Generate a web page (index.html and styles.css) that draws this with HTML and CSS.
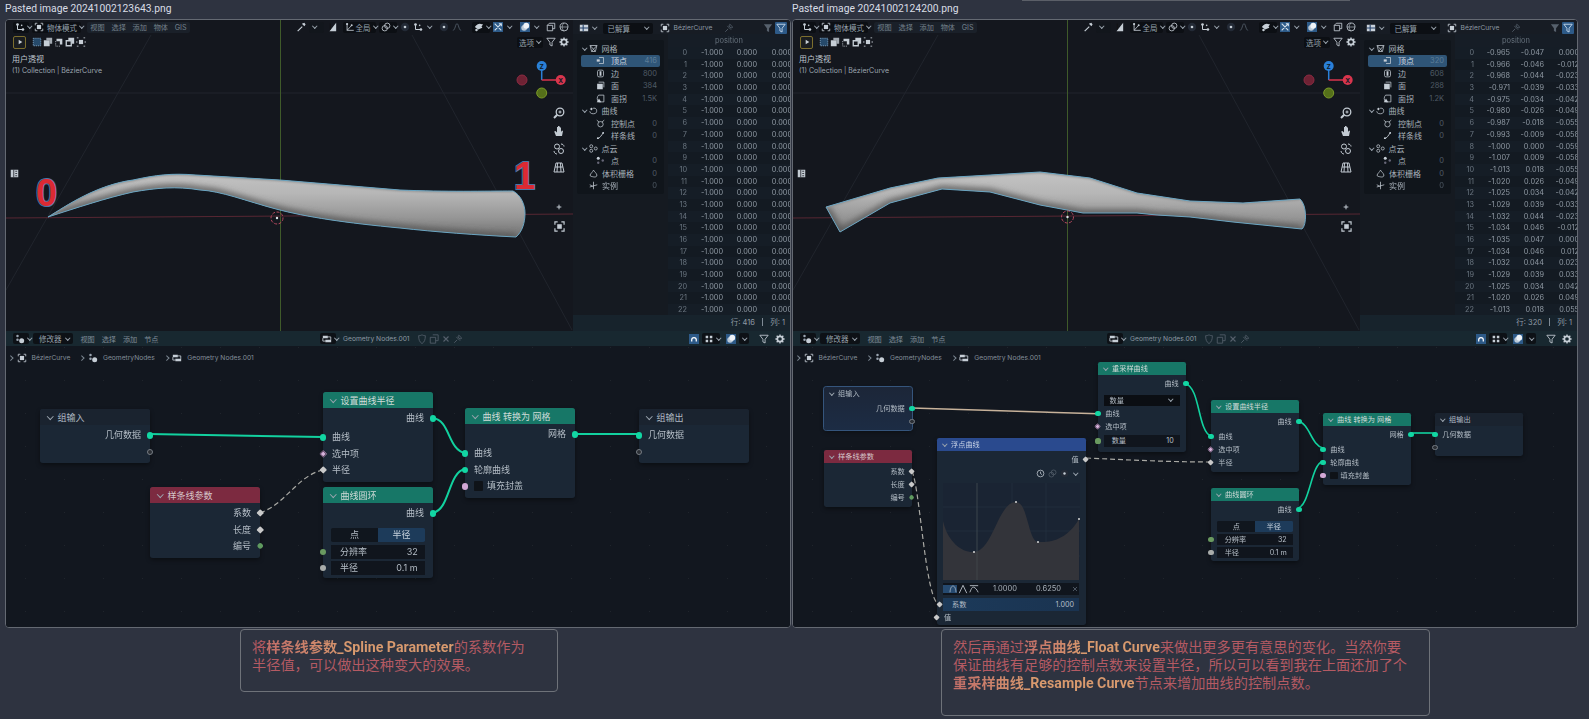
FILE: index.html
```html
<!DOCTYPE html>
<html lang="zh-CN">
<head>
<meta charset="utf-8">
<title>Pasted images</title>
<link rel="stylesheet" href="styles.css">
</head>
<body>
<svg class="defs" aria-hidden="true">
  <defs>
    <linearGradient id="shade" gradientUnits="userSpaceOnUse" x1="0" y1="150" x2="0" y2="218">
      <stop offset="0" stop-color="#c4c4c4"/><stop offset=".35" stop-color="#b6b6b6"/><stop offset=".7" stop-color="#969696"/><stop offset="1" stop-color="#707070"/>
    </linearGradient>
    <filter id="soft" x="-10%" y="-50%" width="120%" height="200%"><feGaussianBlur stdDeviation="3"/></filter>
    <filter id="soft1" x="-10%" y="-50%" width="120%" height="200%"><feGaussianBlur stdDeviation="1.200"/></filter>
    <clipPath id="clip-a"><path id="shape-a" d="M42 197C60 186 90 165 127 160C150 155 165 153 190 155L274 160L394 170C440 172 480 171 507 171C515 175 519 185 519 193C519 203 516 212 510 217C470 215 430 212 394 208C340 203 300 197 270 189C240 181 215 171 194 170C170 166 150 168 127 172C100 178 70 188 42 197Z"/></clipPath>
    <clipPath id="clip-b"><path id="shape-b" d="M33 187 97 168 145 158 197 155 247 152 297 158 344 173 397 181 450 183 507 179C514 185 514 205 509 209L440 202 397 197 364 195 344 193 290 193 247 185 197 172 149 169 97 183 47 212Z"/></clipPath>
  </defs>
  <symbol id="i-axes" viewBox="0 0 12 12"><path d="M3 3v6h6" fill="none" stroke="currentColor" stroke-width="1.2"/><circle cx="3" cy="3" r="1.6" fill="currentColor"/><circle cx="9.5" cy="9" r="1.6" fill="currentColor"/><circle cx="8" cy="4" r="1" fill="currentColor"/></symbol>
  <symbol id="i-obj" viewBox="0 0 12 12"><path d="M1.5 4V1.5H4M8 1.5h2.5V4M10.500 8v2.500H8M4 10.500H1.500V8" fill="none" stroke="currentColor"/><rect x="3.500" y="3.500" width="5" height="5" fill="currentColor"/></symbol>
  <symbol id="i-play" viewBox="0 0 12 12"><path d="M4 2.500 9.500 6 4 9.500z" fill="currentColor"/></symbol>
  <symbol id="i-m1" viewBox="0 0 12 12"><rect x="1.500" y="1.500" width="9" height="9" fill="#264a6b" stroke="#7ea6c8" stroke-dasharray="1.500 1"/></symbol>
  <symbol id="i-m2" viewBox="0 0 12 12"><path d="M1 4h7v7H1z" fill="currentColor"/><path d="M4 1h7v7H8V4H4z" fill="currentColor" opacity=".8"/></symbol>
  <symbol id="i-m3" viewBox="0 0 12 12"><path d="M3 2h7v7H7V5H3z" fill="currentColor"/><path d="M2 5v6h6" fill="none" stroke="currentColor" stroke-dasharray="1 1"/></symbol>
  <symbol id="i-m4" viewBox="0 0 12 12"><path d="M4 1h7v7H8V4H4z" fill="currentColor"/><path d="M1.500 4.500h6v6h-6z" fill="none" stroke="currentColor" stroke-width="1.600"/></symbol>
  <symbol id="i-m5" viewBox="0 0 12 12"><rect x="3.500" y="3.500" width="5" height="5" fill="currentColor"/><path d="M1 1h2M9 1h2M1 11h2M9 11h2M1 5v2M11 5v2" stroke="currentColor"/></symbol>
  <symbol id="i-drop" viewBox="0 0 12 12"><path d="M1.500 10.500 7 5l1 1-5.500 5.500zM7 2l3 3 1.500-2L10 .8z" fill="currentColor"/></symbol>
  <symbol id="i-curve" viewBox="0 0 12 12"><path d="M1 11h2l8-10v10z" fill="currentColor"/><path d="M4 2v7" stroke="#111" /></symbol>
  <symbol id="i-glob" viewBox="0 0 12 12"><path d="M2.500 2v8h8M2.500 10 8 4" fill="none" stroke="currentColor"/><circle cx="2.500" cy="2.500" r="1.300" fill="currentColor"/><circle cx="8" cy="4" r="1.200" fill="currentColor"/></symbol>
  <symbol id="i-link" viewBox="0 0 12 12"><circle cx="4.500" cy="7.500" r="3.200" fill="none" stroke="currentColor"/><circle cx="7.500" cy="4.500" r="3.200" fill="none" stroke="currentColor"/></symbol>
  <symbol id="i-prop" viewBox="0 0 12 12"><circle cx="6" cy="6" r="5" fill="#232a36"/><circle cx="6" cy="6" r="1.600" fill="currentColor"/></symbol>
  <symbol id="i-wave" viewBox="0 0 12 12"><path d="M1 10C4 10 4 2 6 2s2 8 5 8" fill="none" stroke="currentColor"/></symbol>
  <symbol id="i-eye" viewBox="0 0 12 12"><path d="M1 6c2-3 4-4 6-4l4 1-2 2 1 2-5 2z" fill="currentColor"/><circle cx="3" cy="9.500" r="1.500" fill="currentColor"/></symbol>
  <symbol id="i-giz" viewBox="0 0 12 12"><rect width="12" height="12" fill="#2d5a88"/><path d="M2 2l8 8M10 2 2 10M7 2h3v3" stroke="#d5e3ef" fill="none" stroke-width="1.300"/></symbol>
  <symbol id="i-over" viewBox="0 0 12 12"><rect width="12" height="12" fill="#2d5a88"/><circle cx="5" cy="7" r="3.500" fill="#b9c9d8"/><circle cx="7.500" cy="4.500" r="3.500" fill="#eef3f8"/></symbol>
  <symbol id="i-cube" viewBox="0 0 12 12"><path d="M1.500 4h6.500v6.500H1.500zM4 1.500h6.500V8H8M1.500 4 4 1.500" fill="none" stroke="currentColor"/></symbol>
  <symbol id="i-sphere" viewBox="0 0 12 12"><circle cx="6" cy="6" r="4.800" fill="none" stroke="currentColor"/><path d="M1.200 6h9.600M6 1.200c-3 3-3 6.600 0 9.600" fill="none" stroke="currentColor" stroke-width=".7"/></symbol>
  <symbol id="i-filter" viewBox="0 0 12 12"><path d="M1 1.500h10L7.300 6.300v4.500L4.700 9.500V6.300z" fill="none" stroke="currentColor"/></symbol>
  <symbol id="i-filterb" viewBox="0 0 12 12"><path d="M1 1.500h10L7.300 6.300v4.500L4.700 9.500V6.300z" fill="currentColor"/></symbol>
  <symbol id="i-gear" viewBox="0 0 12 12"><circle cx="6" cy="6" r="3.200" fill="none" stroke="currentColor" stroke-width="2"/><path d="M6 .5v2M6 9.500v2M.5 6h2M9.500 6h2M2 2l1.500 1.500M8.500 8.500 10 10M10 2 8.500 3.500M3.500 8.500 2 10" stroke="currentColor" stroke-width="1.600"/></symbol>
  <symbol id="i-spread" viewBox="0 0 12 12"><path d="M1 2h10v8H1z" fill="#c9d2dc"/><path d="M5 2v8M1 6h10" stroke="#24406a" stroke-width="1.300"/></symbol>
  <symbol id="i-pin" viewBox="0 0 12 12"><path d="M1.500 10.500 5 7M4 3.500 8.500 8M7 1.500l3.500 3.500-2 1-2.500-2.500z" fill="none" stroke="currentColor"/></symbol>
  <symbol id="i-mesh" viewBox="0 0 12 12"><path d="M1.500 2h9L8.500 10h-5zM1.500 2 6 7l4.500-5M6 7l-2.500 3M6 7l2.500 3" fill="none" stroke="currentColor"/></symbol>
  <symbol id="i-vert" viewBox="0 0 12 12"><path d="M4 2h6v8H4" fill="none" stroke="currentColor"/><rect x="1" y="4.500" width="4" height="3" fill="currentColor"/></symbol>
  <symbol id="i-edge" viewBox="0 0 12 12"><rect x="2" y="1.500" width="8" height="9" rx="2" fill="none" stroke="currentColor"/><path d="M6 3v6" stroke="currentColor" stroke-width="2.500"/></symbol>
  <symbol id="i-face" viewBox="0 0 12 12"><path d="M1.500 3.500h7.500v7.500H1.500z" fill="currentColor"/><path d="M3.500 1.500h7v7" fill="none" stroke="currentColor"/></symbol>
  <symbol id="i-corn" viewBox="0 0 12 12"><path d="M3.500 1.500h7v9h-7C1 8 1 4 3.500 1.500z" fill="none" stroke="currentColor"/><path d="M1 11l3-5 3 5z" fill="currentColor"/></symbol>
  <symbol id="i-spl" viewBox="0 0 12 12"><path d="M1 7c0 3 4 4 7 3s3-6 0-7-3 2-5 1" fill="none" stroke="currentColor"/><path d="M4 2v4L1 4z" fill="currentColor"/></symbol>
  <symbol id="i-ctrl" viewBox="0 0 12 12"><circle cx="6" cy="7" r="3.600" fill="none" stroke="currentColor"/><path d="M1 1.500 4 4M11 1.500 8 4" stroke="currentColor"/></symbol>
  <symbol id="i-sline" viewBox="0 0 12 12"><path d="M2 10c3 0 5-4 8-8" fill="none" stroke="currentColor" stroke-width="1.200"/><circle cx="2.500" cy="9.500" r="1.300" fill="currentColor"/><circle cx="9.500" cy="2.500" r="1.300" fill="currentColor"/></symbol>
  <symbol id="i-cloud" viewBox="0 0 12 12"><circle cx="3" cy="3" r="2" fill="none" stroke="currentColor"/><circle cx="3" cy="9" r="2" fill="none" stroke="currentColor"/><circle cx="9" cy="6" r="2" fill="none" stroke="currentColor"/></symbol>
  <symbol id="i-dot" viewBox="0 0 12 12"><circle cx="3" cy="3" r="2" fill="currentColor"/><circle cx="3" cy="9" r="1.600" fill="#667"/><circle cx="9" cy="6" r="1.600" fill="#667"/></symbol>
  <symbol id="i-vol" viewBox="0 0 12 12"><path d="M6 1.500c1 2 4 4 4.500 6.500S8 11 6 10.500 1 10 1.500 8 5 4 6 1.500z" fill="none" stroke="currentColor"/></symbol>
  <symbol id="i-inst" viewBox="0 0 12 12"><path d="M6 1v10M1 8l10-3M1 5l4 2" fill="none" stroke="currentColor"/></symbol>
  <symbol id="i-zoom" viewBox="0 0 12 12"><circle cx="7" cy="5" r="3.800" fill="none" stroke="currentColor" stroke-width="1.300"/><path d="M4.200 7.800 1 11" stroke="currentColor" stroke-width="2"/><path d="M5.500 5h3M7 3.500v3" stroke="currentColor"/></symbol>
  <symbol id="i-hand" viewBox="0 0 12 12"><path d="M3 11 1.200 6.500 2.500 6 4 7.500V2h1v3V1h1v4V1.500h1V5 2.500h1V7l1-1.500 1 .5L9 11z" fill="currentColor"/></symbol>
  <symbol id="i-cam" viewBox="0 0 12 12"><circle cx="4" cy="3.500" r="2.500" fill="none" stroke="currentColor"/><circle cx="8" cy="8" r="2.500" fill="none" stroke="currentColor"/><path d="M1 8c0 2 2 3 3 3M11 3.500C11 2 9.500 1 8 1" fill="none" stroke="currentColor"/></symbol>
  <symbol id="i-grid" viewBox="0 0 12 12"><path d="M3 2h6l2 9H1zM2.200 6h7.600M4.500 2 4 11M7.500 2 8 11" fill="none" stroke="currentColor"/></symbol>
  <symbol id="i-plus" viewBox="0 0 12 12"><path d="M6 2.500v7M2.500 6h7" stroke="currentColor" stroke-width="1.500"/></symbol>
  <symbol id="i-frame" viewBox="0 0 12 12"><path d="M1 4V1h3M8 1h3v3M11 8v3H8M4 11H1V8" fill="none" stroke="currentColor" stroke-width="1.300"/><rect x="3.500" y="3.500" width="5" height="5" fill="currentColor"/></symbol>
  <symbol id="i-side" viewBox="0 0 12 12"><rect x="1" y="1" width="10" height="10" fill="currentColor"/><path d="M5 1v10M7 3h2.500M7 6h2.500M7 9h2.500" stroke="#14171e"/></symbol>
  <symbol id="i-gn" viewBox="0 0 12 12"><circle cx="3" cy="2.500" r="1.500" fill="#9aa5b1"/><circle cx="3" cy="7" r="1.500" fill="#9aa5b1"/><circle cx="8" cy="8" r="3" fill="currentColor"/></symbol>
  <symbol id="i-ng" viewBox="0 0 12 12"><path d="M1 2h6v3H1zM4 7h7v3H4z" fill="currentColor"/><path d="M7 3.500h3.500V7M4 8.500H1V5" fill="none" stroke="currentColor"/></symbol>
  <symbol id="i-shield" viewBox="0 0 12 12"><path d="M2 2c2 0 3-.5 4-1 1 .5 2 1 4 1 0 5-1 7.500-4 9.500C3 9.500 2 7 2 2z" fill="none" stroke="currentColor"/></symbol>
  <symbol id="i-copy" viewBox="0 0 12 12"><path d="M4.500 1h6.500v7H8M1.500 4h6.500v7H1.500z" fill="none" stroke="currentColor"/></symbol>
  <symbol id="i-x" viewBox="0 0 12 12"><path d="M3 3l6 6M9 3l-6 6" stroke="currentColor" stroke-width="1.300"/></symbol>
  <symbol id="i-snap" viewBox="0 0 12 12"><rect width="12" height="12" fill="#2d5a88"/><path d="M2.500 7A3.500 3.500 0 1 1 9.500 7v2H8V7a2 2 0 0 0-4 0v2H2.500z" fill="#fff"/></symbol>
  <symbol id="i-snap2" viewBox="0 0 12 12"><path d="M2 2h3v3H2zM7 2h3v3H7zM2 7h3v3H2zM7 7h3v3H7z" fill="currentColor"/></symbol>
  <symbol id="i-hist" viewBox="0 0 12 12"><circle cx="6" cy="6" r="4.500" fill="none" stroke="currentColor"/><path d="M6 3.500V6l2 1.500" fill="none" stroke="currentColor"/></symbol>
  <symbol id="i-auto" viewBox="0 0 12 12"><path d="M1.500 11C2 4 4 1.500 6 1.500S10 4 10.500 11" fill="none" stroke="currentColor"/></symbol>
  <symbol id="i-vec" viewBox="0 0 12 12"><path d="M1.500 11 6 1.500 10.500 11" fill="none" stroke="currentColor"/></symbol>
  <symbol id="i-free" viewBox="0 0 12 12"><path d="M1 10c2-5 3-7 5-6s3 2 5 6M1 2h10" fill="none" stroke="currentColor"/></symbol>
</svg>

<div class="edge"></div>
<main class="page">

<!-- ============ left ============ -->
<section class="col">
  <div class="fname">Pasted image 20241002123643.png</div>
  <div class="shot shot-a">
    <div class="top">
      <div class="vp">
        <svg class="vp-bg" viewBox="0 0 567 311">
          <path class="gl" d="M0 73H567M145 15 0 270M406 15 566 310"/>
          <path class="gy" d="M274.500 0V311"/>
          <path class="gx" d="M0 198 567 194"/>
          <use class="body" href="#shape-a"/>
          <g clip-path="url(#clip-a)">
            <path class="under" d="M42 197C70 188 100 178 127 172C150 168 170 166 194 170C215 171 240 181 270 189C300 197 340 203 394 208C430 212 470 215 510 217"/>
            <path class="upper" d="M42 197C60 186 90 165 127 160C150 155 165 153 190 155L274 160L394 170C440 172 480 171 507 171"/>
          </g>
          <use class="outline" href="#shape-a"/>
          <circle class="cur" cx="271" cy="198" r="6"/><circle class="curd" cx="271" cy="198" r="1.200"/>
          <path class="zax" d="M535.700 46V60"/><path class="xax" d="M535.700 60H554.700"/>
          <circle class="gxn" cx="516" cy="60" r="5"/><circle class="gyn" cx="535.700" cy="73" r="5"/><circle class="gzn" cx="535.700" cy="46" r="5"/><circle class="gxp" cx="554.700" cy="60" r="5"/>
          <text class="gl-t" x="535.700" y="48.500">Z</text><text class="gl-t" x="554.700" y="62.500">X</text>
          <use class="tool" href="#i-zoom" x="547" y="87" width="12" height="12"/><use class="tool" href="#i-hand" x="547" y="105" width="12" height="12"/><use class="tool" href="#i-cam" x="547" y="123" width="12" height="12"/><use class="tool" href="#i-grid" x="547" y="141" width="12" height="12"/><use class="tool" href="#i-plus" x="549" y="183" width="8" height="8"/><use class="tool" href="#i-frame" x="548" y="201" width="11" height="11"/><use class="tool" href="#i-side" x="4" y="149" width="9" height="9"/>
        </svg>
        <div class="vh">
          <span class="dd d16"><svg class="ic"><use href="#i-axes"/></svg><i class="cv"></i></span>
          <span class="dd d49"><svg class="ic"><use href="#i-obj"/></svg><b>物体模式</b><i class="cv"></i></span>
          <span class="menus m103"><b>视图</b><b>选择</b><b>添加</b><b>物体</b><b>GIS</b></span>
          <span class="tools t-r">
            <svg class="ic"><use href="#i-drop"/></svg>
            <span class="dd d14 ghost"><i class="cv"></i></span>
            <svg class="ic"><use href="#i-curve"/></svg>
            <span class="dd d33 sp"><svg class="ic"><use href="#i-glob"/></svg><b>全局</b><i class="cv"></i></span>
            <span class="dd d18"><svg class="ic"><use href="#i-link"/></svg><i class="cv"></i></span>
            <svg class="ic"><use href="#i-prop"/></svg><svg class="ic"><use href="#i-axes"/></svg><i class="cv"></i>
            <svg class="ic sp"><use href="#i-prop"/></svg><svg class="ic dim"><use href="#i-wave"/></svg>
            <span class="dd d18 sp2"><svg class="ic"><use href="#i-eye"/></svg><i class="cv"></i></span>
            <svg class="ic"><use href="#i-giz"/></svg><i class="cv"></i>
            <svg class="ic sp"><use href="#i-over"/></svg><i class="cv"></i>
            <svg class="ic sp"><use href="#i-cube"/></svg><svg class="ic"><use href="#i-sphere"/></svg>
          </span>
        </div>
        <div class="vh vh2">
          <span class="playb"><svg class="ic"><use href="#i-play"/></svg></span>
          <svg class="ic"><use href="#i-m1"/></svg><svg class="ic"><use href="#i-m2"/></svg><svg class="ic"><use href="#i-m3"/></svg><svg class="ic"><use href="#i-m4"/></svg><svg class="ic"><use href="#i-m5"/></svg>
          <span class="tools t-r"><span class="dd d26"><b>选项</b><i class="cv"></i></span><svg class="ic"><use href="#i-filter"/></svg><svg class="ic"><use href="#i-gear"/></svg></span>
        </div>
        <div class="ov"><p class="ov-c">用户透视</p><p>(1) Collection | BézierCurve</p></div>
        <span class="mark m0">0</span><span class="mark m1">1</span>
      </div>
      <div class="ss">
        <div class="ssh">
          <svg class="ic"><use href="#i-spread"/></svg><i class="cv"></i>
          <span class="dd d50"><b>已解算</b><i class="cv"></i></span>
          <svg class="ic"><use href="#i-obj"/></svg><span class="nm">BézierCurve</span><svg class="ic dim"><use href="#i-pin"/></svg>
          <svg class="ic dim push"><use href="#i-filterb"/></svg><span class="fblue"><svg class="ic"><use href="#i-filter"/></svg></span>
        </div>
        <div class="ssm">
          <div class="side">
            <div class="panel">
              <div class="sr"><i class="cv"></i><svg class="ic"><use href="#i-mesh"/></svg><span>网格</span></div>
              <div class="sr l1 on"><svg class="ic"><use href="#i-vert"/></svg><span>顶点</span><em>416</em></div>
              <div class="sr l1"><svg class="ic"><use href="#i-edge"/></svg><span>边</span><em>800</em></div>
              <div class="sr l1"><svg class="ic"><use href="#i-face"/></svg><span>面</span><em>384</em></div>
              <div class="sr l1"><svg class="ic"><use href="#i-corn"/></svg><span>面拐</span><em>1.5K</em></div>
              <div class="sr"><i class="cv"></i><svg class="ic"><use href="#i-spl"/></svg><span>曲线</span></div>
              <div class="sr l1"><svg class="ic"><use href="#i-ctrl"/></svg><span>控制点</span><em>0</em></div>
              <div class="sr l1"><svg class="ic"><use href="#i-sline"/></svg><span>样条线</span><em>0</em></div>
              <div class="sr"><i class="cv"></i><svg class="ic"><use href="#i-cloud"/></svg><span>点云</span></div>
              <div class="sr l1"><svg class="ic"><use href="#i-dot"/></svg><span>点</span><em>0</em></div>
              <div class="sr nc"><svg class="ic"><use href="#i-vol"/></svg><span>体积栅格</span><em>0</em></div>
              <div class="sr nc"><svg class="ic"><use href="#i-inst"/></svg><span>实例</span><em>0</em></div>
            </div>
          </div>
          <div class="tbl">
            <div class="thd"><span></span><span class="pos">position</span></div>
            <div class="tr"><b>0</b><span>-1.000</span><span>0.000</span><span>0.000</span></div>
            <div class="tr"><b>1</b><span>-1.000</span><span>0.000</span><span>0.000</span></div>
            <div class="tr"><b>2</b><span>-1.000</span><span>0.000</span><span>0.000</span></div>
            <div class="tr"><b>3</b><span>-1.000</span><span>0.000</span><span>0.000</span></div>
            <div class="tr"><b>4</b><span>-1.000</span><span>0.000</span><span>0.000</span></div>
            <div class="tr"><b>5</b><span>-1.000</span><span>0.000</span><span>0.000</span></div>
            <div class="tr"><b>6</b><span>-1.000</span><span>0.000</span><span>0.000</span></div>
            <div class="tr"><b>7</b><span>-1.000</span><span>0.000</span><span>0.000</span></div>
            <div class="tr"><b>8</b><span>-1.000</span><span>0.000</span><span>0.000</span></div>
            <div class="tr"><b>9</b><span>-1.000</span><span>0.000</span><span>0.000</span></div>
            <div class="tr"><b>10</b><span>-1.000</span><span>0.000</span><span>0.000</span></div>
            <div class="tr"><b>11</b><span>-1.000</span><span>0.000</span><span>0.000</span></div>
            <div class="tr"><b>12</b><span>-1.000</span><span>0.000</span><span>0.000</span></div>
            <div class="tr"><b>13</b><span>-1.000</span><span>0.000</span><span>0.000</span></div>
            <div class="tr"><b>14</b><span>-1.000</span><span>0.000</span><span>0.000</span></div>
            <div class="tr"><b>15</b><span>-1.000</span><span>0.000</span><span>0.000</span></div>
            <div class="tr"><b>16</b><span>-1.000</span><span>0.000</span><span>0.000</span></div>
            <div class="tr"><b>17</b><span>-1.000</span><span>0.000</span><span>0.000</span></div>
            <div class="tr"><b>18</b><span>-1.000</span><span>0.000</span><span>0.000</span></div>
            <div class="tr"><b>19</b><span>-1.000</span><span>0.000</span><span>0.000</span></div>
            <div class="tr"><b>20</b><span>-1.000</span><span>0.000</span><span>0.000</span></div>
            <div class="tr"><b>21</b><span>-1.000</span><span>0.000</span><span>0.000</span></div>
            <div class="tr"><b>22</b><span>-1.000</span><span>0.000</span><span>0.000</span></div>
          </div>
        </div>
        <div class="ssf">行: 416 <u></u> 列: 1</div>
      </div>
    </div>
    <div class="ne">
      <div class="neh">
        <span class="dd d16"><svg class="ic"><use href="#i-gn"/></svg><i class="cv"></i></span>
        <span class="dd d40"><b>修改器</b><i class="cv"></i></span>
        <span class="menus m82"><b>视图</b><b>选择</b><b>添加</b><b>节点</b></span>
        <span class="dd d16 ngb"><svg class="ic"><use href="#i-ng"/></svg><i class="cv"></i></span>
        <span class="nm nm-g">Geometry Nodes.001</span>
        <svg class="ic dim"><use href="#i-shield"/></svg><svg class="ic dim"><use href="#i-copy"/></svg><svg class="ic dim"><use href="#i-x"/></svg><svg class="ic dim"><use href="#i-pin"/></svg>
        <span class="tools t-r2"><svg class="ic"><use href="#i-snap"/></svg><span class="dd d18"><svg class="ic"><use href="#i-snap2"/></svg><i class="cv"></i></span><svg class="ic sp"><use href="#i-over"/></svg><span class="dd d9"><i class="cv"></i></span><svg class="ic sp2"><use href="#i-filter"/></svg><svg class="ic sp"><use href="#i-gear"/></svg></span>
      </div>
      <div class="crumbs"><i class="gt"></i><svg class="ic"><use href="#i-obj"/></svg><span>BézierCurve</span><i class="gt"></i><svg class="ic"><use href="#i-gn"/></svg><span>GeometryNodes</span><i class="gt"></i><svg class="ic"><use href="#i-ng"/></svg><span>Geometry Nodes.001</span></div>
      <svg class="links" viewBox="6 331 784 296">
        <path class="geo" d="M149 434 323 437"/>
        <path class="val" d="M260 512.700C285 505 298 475 323 470"/>
        <path class="geo" d="M433 418C450 420 448 450 465 453"/>
        <path class="geo" d="M433 512.700C450 510 448 472 465 469"/>
        <path class="geo" d="M575 434H638"/>
      </svg>
      <div class="node gin">
        <h4 class="hd"><i class="cv"></i>组输入</h4>
        <div class="row out">几何数据<i class="s o geo-s"></i></div>
        <div class="row out"><i class="s o emp"></i></div>
      </div>
      <div class="node spl">
        <h4 class="hd red"><i class="cv"></i>样条线参数</h4>
        <div class="row out">系数<i class="s o dia"></i></div>
        <div class="row out">长度<i class="s o dia"></i></div>
        <div class="row out">编号<i class="s o dia int"></i></div>
      </div>
      <div class="node setr">
        <h4 class="hd teal"><i class="cv"></i>设置曲线半径</h4>
        <div class="row out">曲线<i class="s o geo-s"></i></div>
        <div class="row gap">曲线<i class="s i geo-s"></i></div>
        <div class="row">选中项<i class="s i dia boo"></i></div>
        <div class="row">半径<i class="s i dia"></i></div>
      </div>
      <div class="node circ">
        <h4 class="hd teal"><i class="cv"></i>曲线圆环</h4>
        <div class="row out">曲线<i class="s o geo-s"></i></div>
        <div class="seg"><span>点</span><span class="on">半径</span></div>
        <div class="row fld">分辨率<em>32</em><i class="s i rint"></i></div>
        <div class="row fld">半径<em>0.1 m</em><i class="s i rval"></i></div>
      </div>
      <div class="node conv">
        <h4 class="hd teal"><i class="cv"></i>曲线 转换为 网格</h4>
        <div class="row out">网格<i class="s o geo-s"></i></div>
        <div class="row gap">曲线<i class="s i geo-s"></i></div>
        <div class="row">轮廓曲线<i class="s i geo-s"></i></div>
        <div class="row"><i class="chk"></i>填充封盖<i class="s i rboo"></i></div>
      </div>
      <div class="node gout">
        <h4 class="hd"><i class="cv"></i>组输出</h4>
        <div class="row">几何数据<i class="s i geo-s"></i></div>
        <div class="row"><i class="s i emp"></i></div>
      </div>
    </div>
  </div>
  <div class="note note-a"><p>将<strong>样条线参数_Spline Parameter</strong>的系数作为半径值，可以做出这种变大的效果。</p></div>
</section>

<!-- ============ right ============ -->
<section class="col">
  <div class="fname">Pasted image 20241002124200.png</div>
  <div class="shot shot-b">
    <div class="top">
      <div class="vp">
        <svg class="vp-bg" viewBox="0 0 567 311">
          <path class="gl" d="M0 73H567M145 15 0 270M406 15 566 310"/>
          <path class="gy" d="M274.500 0V311"/>
          <path class="gx" d="M0 198 567 194"/>
          <use class="body" href="#shape-b"/>
          <g clip-path="url(#clip-b)">
            <path class="under" d="M33 187 47 212 97 183 149 169 197 172 247 185 290 193 344 193 364 195 397 197 440 202 509 209"/>
            <path class="upper" d="M33 187 97 168 145 158 197 155 247 152 297 158 344 173 397 181 450 183 507 179"/>
          </g>
          <use class="outline" href="#shape-b"/>
          <circle class="cur" cx="274.500" cy="197" r="6"/><circle class="curd" cx="274.500" cy="197" r="1.200"/>
          <path class="zax" d="M535.700 46V60"/><path class="xax" d="M535.700 60H554.700"/>
          <circle class="gxn" cx="516" cy="60" r="5"/><circle class="gyn" cx="535.700" cy="73" r="5"/><circle class="gzn" cx="535.700" cy="46" r="5"/><circle class="gxp" cx="554.700" cy="60" r="5"/>
          <text class="gl-t" x="535.700" y="48.500">Z</text><text class="gl-t" x="554.700" y="62.500">X</text>
          <use class="tool" href="#i-zoom" x="547" y="87" width="12" height="12"/><use class="tool" href="#i-hand" x="547" y="105" width="12" height="12"/><use class="tool" href="#i-cam" x="547" y="123" width="12" height="12"/><use class="tool" href="#i-grid" x="547" y="141" width="12" height="12"/><use class="tool" href="#i-plus" x="549" y="183" width="8" height="8"/><use class="tool" href="#i-frame" x="548" y="201" width="11" height="11"/><use class="tool" href="#i-side" x="4" y="149" width="9" height="9"/>
        </svg>
        <div class="vh">
          <span class="dd d16"><svg class="ic"><use href="#i-axes"/></svg><i class="cv"></i></span>
          <span class="dd d49"><svg class="ic"><use href="#i-obj"/></svg><b>物体模式</b><i class="cv"></i></span>
          <span class="menus m103"><b>视图</b><b>选择</b><b>添加</b><b>物体</b><b>GIS</b></span>
          <span class="tools t-r">
            <svg class="ic"><use href="#i-drop"/></svg>
            <span class="dd d14 ghost"><i class="cv"></i></span>
            <svg class="ic"><use href="#i-curve"/></svg>
            <span class="dd d33 sp"><svg class="ic"><use href="#i-glob"/></svg><b>全局</b><i class="cv"></i></span>
            <span class="dd d18"><svg class="ic"><use href="#i-link"/></svg><i class="cv"></i></span>
            <svg class="ic"><use href="#i-prop"/></svg><svg class="ic"><use href="#i-axes"/></svg><i class="cv"></i>
            <svg class="ic sp"><use href="#i-prop"/></svg><svg class="ic dim"><use href="#i-wave"/></svg>
            <span class="dd d18 sp2"><svg class="ic"><use href="#i-eye"/></svg><i class="cv"></i></span>
            <svg class="ic"><use href="#i-giz"/></svg><i class="cv"></i>
            <svg class="ic sp"><use href="#i-over"/></svg><i class="cv"></i>
            <svg class="ic sp"><use href="#i-cube"/></svg><svg class="ic"><use href="#i-sphere"/></svg>
          </span>
        </div>
        <div class="vh vh2">
          <span class="playb"><svg class="ic"><use href="#i-play"/></svg></span>
          <svg class="ic"><use href="#i-m1"/></svg><svg class="ic"><use href="#i-m2"/></svg><svg class="ic"><use href="#i-m3"/></svg><svg class="ic"><use href="#i-m4"/></svg><svg class="ic"><use href="#i-m5"/></svg>
          <span class="tools t-r"><span class="dd d26"><b>选项</b><i class="cv"></i></span><svg class="ic"><use href="#i-filter"/></svg><svg class="ic"><use href="#i-gear"/></svg></span>
        </div>
        <div class="ov"><p class="ov-c">用户透视</p><p>(1) Collection | BézierCurve</p></div>
      </div>
      <div class="ss">
        <div class="ssh">
          <svg class="ic"><use href="#i-spread"/></svg><i class="cv"></i>
          <span class="dd d50"><b>已解算</b><i class="cv"></i></span>
          <svg class="ic"><use href="#i-obj"/></svg><span class="nm">BézierCurve</span><svg class="ic dim"><use href="#i-pin"/></svg>
          <svg class="ic dim push"><use href="#i-filterb"/></svg><span class="fblue"><svg class="ic"><use href="#i-filter"/></svg></span>
        </div>
        <div class="ssm">
          <div class="side">
            <div class="panel">
              <div class="sr"><i class="cv"></i><svg class="ic"><use href="#i-mesh"/></svg><span>网格</span></div>
              <div class="sr l1 on"><svg class="ic"><use href="#i-vert"/></svg><span>顶点</span><em>320</em></div>
              <div class="sr l1"><svg class="ic"><use href="#i-edge"/></svg><span>边</span><em>608</em></div>
              <div class="sr l1"><svg class="ic"><use href="#i-face"/></svg><span>面</span><em>288</em></div>
              <div class="sr l1"><svg class="ic"><use href="#i-corn"/></svg><span>面拐</span><em>1.2K</em></div>
              <div class="sr"><i class="cv"></i><svg class="ic"><use href="#i-spl"/></svg><span>曲线</span></div>
              <div class="sr l1"><svg class="ic"><use href="#i-ctrl"/></svg><span>控制点</span><em>0</em></div>
              <div class="sr l1"><svg class="ic"><use href="#i-sline"/></svg><span>样条线</span><em>0</em></div>
              <div class="sr"><i class="cv"></i><svg class="ic"><use href="#i-cloud"/></svg><span>点云</span></div>
              <div class="sr l1"><svg class="ic"><use href="#i-dot"/></svg><span>点</span><em>0</em></div>
              <div class="sr nc"><svg class="ic"><use href="#i-vol"/></svg><span>体积栅格</span><em>0</em></div>
              <div class="sr nc"><svg class="ic"><use href="#i-inst"/></svg><span>实例</span><em>0</em></div>
            </div>
          </div>
          <div class="tbl">
            <div class="thd"><span></span><span class="pos">position</span></div>
            <div class="tr"><b>0</b><span>-0.965</span><span>-0.047</span><span>0.000</span></div>
            <div class="tr"><b>1</b><span>-0.966</span><span>-0.046</span><span>-0.012</span></div>
            <div class="tr"><b>2</b><span>-0.968</span><span>-0.044</span><span>-0.023</span></div>
            <div class="tr"><b>3</b><span>-0.971</span><span>-0.039</span><span>-0.033</span></div>
            <div class="tr"><b>4</b><span>-0.975</span><span>-0.034</span><span>-0.042</span></div>
            <div class="tr"><b>5</b><span>-0.980</span><span>-0.026</span><span>-0.049</span></div>
            <div class="tr"><b>6</b><span>-0.987</span><span>-0.018</span><span>-0.055</span></div>
            <div class="tr"><b>7</b><span>-0.993</span><span>-0.009</span><span>-0.058</span></div>
            <div class="tr"><b>8</b><span>-1.000</span><span>0.000</span><span>-0.059</span></div>
            <div class="tr"><b>9</b><span>-1.007</span><span>0.009</span><span>-0.058</span></div>
            <div class="tr"><b>10</b><span>-1.013</span><span>0.018</span><span>-0.055</span></div>
            <div class="tr"><b>11</b><span>-1.020</span><span>0.026</span><span>-0.049</span></div>
            <div class="tr"><b>12</b><span>-1.025</span><span>0.034</span><span>-0.042</span></div>
            <div class="tr"><b>13</b><span>-1.029</span><span>0.039</span><span>-0.033</span></div>
            <div class="tr"><b>14</b><span>-1.032</span><span>0.044</span><span>-0.023</span></div>
            <div class="tr"><b>15</b><span>-1.034</span><span>0.046</span><span>-0.012</span></div>
            <div class="tr"><b>16</b><span>-1.035</span><span>0.047</span><span>0.000</span></div>
            <div class="tr"><b>17</b><span>-1.034</span><span>0.046</span><span>0.012</span></div>
            <div class="tr"><b>18</b><span>-1.032</span><span>0.044</span><span>0.023</span></div>
            <div class="tr"><b>19</b><span>-1.029</span><span>0.039</span><span>0.033</span></div>
            <div class="tr"><b>20</b><span>-1.025</span><span>0.034</span><span>0.042</span></div>
            <div class="tr"><b>21</b><span>-1.020</span><span>0.026</span><span>0.049</span></div>
            <div class="tr"><b>22</b><span>-1.013</span><span>0.018</span><span>0.055</span></div>
          </div>
        </div>
        <div class="ssf">行: 320 <u></u> 列: 1</div>
      </div>
    </div>
    <div class="ne">
      <div class="neh">
        <span class="dd d16"><svg class="ic"><use href="#i-gn"/></svg><i class="cv"></i></span>
        <span class="dd d40"><b>修改器</b><i class="cv"></i></span>
        <span class="menus m82"><b>视图</b><b>选择</b><b>添加</b><b>节点</b></span>
        <span class="dd d16 ngb"><svg class="ic"><use href="#i-ng"/></svg><i class="cv"></i></span>
        <span class="nm nm-g">Geometry Nodes.001</span>
        <svg class="ic dim"><use href="#i-shield"/></svg><svg class="ic dim"><use href="#i-copy"/></svg><svg class="ic dim"><use href="#i-x"/></svg><svg class="ic dim"><use href="#i-pin"/></svg>
        <span class="tools t-r2"><svg class="ic"><use href="#i-snap"/></svg><span class="dd d18"><svg class="ic"><use href="#i-snap2"/></svg><i class="cv"></i></span><svg class="ic sp"><use href="#i-over"/></svg><span class="dd d9"><i class="cv"></i></span><svg class="ic sp2"><use href="#i-filter"/></svg><svg class="ic sp"><use href="#i-gear"/></svg></span>
      </div>
      <div class="crumbs"><i class="gt"></i><svg class="ic"><use href="#i-obj"/></svg><span>BézierCurve</span><i class="gt"></i><svg class="ic"><use href="#i-gn"/></svg><span>GeometryNodes</span><i class="gt"></i><svg class="ic"><use href="#i-ng"/></svg><span>Geometry Nodes.001</span></div>
      <svg class="links" viewBox="793 331 784 296">
        <path class="sel-l" d="M912 408 1098 413.700"/>
        <path class="geo" d="M1186 384C1200 388 1198 432 1211 436"/>
        <path class="geo" d="M1298 421C1310 424 1311 445 1323 448"/>
        <path class="geo" d="M1298 508C1310 505 1311 464 1323 461"/>
        <path class="geo" d="M1410 433H1435"/>
        <path class="val" d="M1086 458C1130 460 1170 462 1211 462"/>
        <path class="val" d="M912 471C920 490 925 590 937 603"/>
      </svg>
      <div class="node gin sel">
        <h4 class="hd plain"><i class="cv"></i>组输入</h4>
        <div class="row out">几何数据<i class="s o geo-s"></i></div>
        <div class="row out"><i class="s o emp"></i></div>
      </div>
      <div class="node spl">
        <h4 class="hd red"><i class="cv"></i>样条线参数</h4>
        <div class="row out">系数<i class="s o dia"></i></div>
        <div class="row out">长度<i class="s o dia"></i></div>
        <div class="row out">编号<i class="s o dia int"></i></div>
      </div>
      <div class="node fc">
        <h4 class="hd blue"><i class="cv"></i>浮点曲线</h4>
        <div class="row out">值<i class="s o dia"></i></div>
        <div class="fc-tools"><svg class="ic"><use href="#i-hist"/></svg><svg class="ic dim"><use href="#i-link"/></svg><svg class="ic"><use href="#i-prop"/></svg><i class="cv"></i></div>
        <svg class="fc-box" viewBox="0 0 137 97">
          <path class="fc-grid" d="M34 0V97M69 0V97M103 0V97M0 24H137M0 48H137M0 73H137"/>
          <path class="fc-area" d="M0 38C5 60 20 70 31 69C50 68 55 19 73 19C85 19 85 58 95 59C110 60 125 55 136 36V97H0Z"/>
          <path class="fc-ax" d="M34 0V97"/>
          <circle class="fc-p" cx="31" cy="69" r="1"/><circle class="fc-p" cx="73" cy="19" r="1"/><circle class="fc-p" cx="95" cy="59" r="1"/><circle class="fc-p" cx="136" cy="36" r="1"/>
        </svg>
        <div class="fc-bar"><span class="fc-sel"><svg class="ic"><use href="#i-auto"/></svg></span><svg class="ic"><use href="#i-vec"/></svg><svg class="ic"><use href="#i-free"/></svg><span class="v1">1.0000</span><span class="v2">0.6250</span><svg class="ic dim"><use href="#i-x"/></svg></div>
        <div class="row fac">系数<em>1.000</em><i class="s i dia"></i></div>
        <div class="row">值<i class="s i dia"></i></div>
      </div>
      <div class="node res">
        <h4 class="hd teal"><i class="cv"></i>重采样曲线</h4>
        <div class="row out">曲线<i class="s o geo-s"></i></div>
        <div class="drop">数量<i class="cv"></i></div>
        <div class="row">曲线<i class="s i geo-s"></i></div>
        <div class="row">选中项<i class="s i dia boo"></i></div>
        <div class="row fld">数量<em>10</em><i class="s i rint"></i></div>
      </div>
      <div class="node setr">
        <h4 class="hd teal"><i class="cv"></i>设置曲线半径</h4>
        <div class="row out">曲线<i class="s o geo-s"></i></div>
        <div class="row gap">曲线<i class="s i geo-s"></i></div>
        <div class="row">选中项<i class="s i dia boo"></i></div>
        <div class="row">半径<i class="s i dia"></i></div>
      </div>
      <div class="node circ">
        <h4 class="hd teal"><i class="cv"></i>曲线圆环</h4>
        <div class="row out">曲线<i class="s o geo-s"></i></div>
        <div class="seg"><span>点</span><span class="on">半径</span></div>
        <div class="row fld">分辨率<em>32</em><i class="s i rint"></i></div>
        <div class="row fld">半径<em>0.1 m</em><i class="s i rval"></i></div>
      </div>
      <div class="node conv">
        <h4 class="hd teal"><i class="cv"></i>曲线 转换为 网格</h4>
        <div class="row out">网格<i class="s o geo-s"></i></div>
        <div class="row gap">曲线<i class="s i geo-s"></i></div>
        <div class="row">轮廓曲线<i class="s i geo-s"></i></div>
        <div class="row"><i class="chk"></i>填充封盖<i class="s i rboo"></i></div>
      </div>
      <div class="node gout">
        <h4 class="hd"><i class="cv"></i>组输出</h4>
        <div class="row">几何数据<i class="s i geo-s"></i></div>
        <div class="row"><i class="s i emp"></i></div>
      </div>
    </div>
  </div>
  <div class="note note-b"><p>然后再通过<strong>浮点曲线_Float Curve</strong>来做出更多更有意思的变化。当然你要保证曲线有足够的控制点数来设置半径，所以可以看到我在上面还加了个<strong>重采样曲线_Resample Curve</strong>节点来增加曲线的控制点数。</p></div>
</section>
</main>
</body>
</html>
```

FILE: styles.css
```css
* { box-sizing: border-box; }
html, body { margin: 0; height: 100%; }
body {
  background: #2e3340;
  font-family: "Inter", "Noto Sans CJK SC", sans-serif;
  overflow: hidden;
  position: relative;
}
p, h4 { margin: 0; font-weight: 400; }
i, em, b { font-style: normal; font-weight: 400; }

.defs { position: absolute; width: 0; height: 0; }
.edge { position: absolute; left: 1022px; top: 0; width: 328px; height: 1px; background: #5b5f68; }

.page { display: flex; gap: 1px; padding-left: 5px; }
.col { width: 786px; flex: none; }
.fname {
  height: 19px;
  font: 10.300px/18px "Roboto", sans-serif;
  color: #d9dee6;
}
.shot {
  width: 786px;
  height: 609px;
  border: 1px solid #646972;
  border-radius: 4px;
  background: #12171f;
  overflow: hidden;
  filter: blur(.45px);
}
.top { display: flex; height: 311px; }

/* shared small pieces */
.ic { width: 10px; height: 10px; flex: none; color: #c6ced6; display: block; }
.ic.dim { color: #56606c; }
.cv {
  display: inline-block; flex: none;
  width: 3.500px; height: 3.500px;
  border-right: 1px solid #9aa4ae; border-bottom: 1px solid #9aa4ae;
  transform: translateY(-1px) rotate(45deg);
  margin: 0 2px;
}
.dd {
  display: flex; align-items: center; flex: none;
  height: 11px; gap: 1px;
  padding: 0 2px;
  background: #0c0f14;
  border-radius: 2px;
  font-size: 7.500px;
  color: #97a2ad;
}
.dd b { flex: 1; white-space: nowrap; }
.ghost { background: #12161c; }
.d9 { width: 10px; } .d14 { width: 15px; } .d16 { width: 16px; } .d18 { width: 18px; }
.d26 { width: 26px; } .d33 { width: 33px; } .d40 { width: 40px; } .d49 { width: 49px; } .d50 { width: 50px; }
.menus {
  display: flex; justify-content: space-around; align-items: center; flex: none;
  height: 11px; margin-left: 6px;
  background: #1a2029;
  border-radius: 2px;
  font-size: 7.200px;
  color: #74808c;
}
.m103 { width: 103px; }
.m82 { width: 85px; background: transparent; color: #7f8b97; }
.tools { display: flex; align-items: center; gap: 3px; }
.sp { margin-left: 3px; }
.sp2 { margin-left: 7px; }

/* viewport */
.vp { position: relative; width: 567px; height: 311px; background: #14171e; padding-top: 1px; overflow: hidden; }
.vp-bg { position: absolute; left: 0; top: 0; width: 567px; height: 311px; }
.gl { fill: none; stroke: #21252d; stroke-width: 1; }
.gy { stroke: #3f5a2a; stroke-width: 1; }
.gx { stroke: #582733; stroke-width: 1; }
.body { fill: url(#shade); }
.outline { fill: none; stroke: #6aa5c2; stroke-width: 1; stroke-linejoin: round; }
.under { fill: none; stroke: #565656; stroke-width: 6; filter: url(#soft); }
.upper { fill: none; stroke: #8c8c8c; stroke-width: 2; filter: url(#soft1); }
.cur { fill: none; stroke: #b5495f; stroke-width: 1; stroke-dasharray: 3 1.500; }
.curd { fill: #dfe6ea; }
.zax { stroke: #2a80d8; stroke-width: 1.500; }
.xax { stroke: #d9354d; stroke-width: 1.500; }
.gzn { fill: #2a80d8; }
.gxp { fill: #d9354d; }
.gxn { fill: #6e2234; stroke: #8c2b42; }
.gyn { fill: #55701a; stroke: #7b9a28; }
.gl-t { font: 700 6.500px "Inter", sans-serif; fill: #0f1a26; text-anchor: middle; }
.tool { color: #c3cbd3; }
.vh { position: relative; display: flex; align-items: center; height: 12px; padding-left: 7px; }
.vh > .dd { margin-right: 3px; }
.vh .menus { margin-left: 3px; }
.vh .d49 b { padding-left: 2px; }
.vh2 { margin-top: 3px; gap: 1px; }
.playb { width: 13px; height: 13px; margin-right: 5px; border: 1px solid #7c6e2e; border-radius: 2px; background: #1a1d20; display: flex; align-items: center; justify-content: center; }
.playb .ic { width: 8px; height: 8px; }
.t-r { margin-left: auto; padding-right: 4px; }
.ov { position: relative; margin: 6px 0 0 6px; font-size: 7px; line-height: 11px; color: #9da6b0; white-space: nowrap; }
.ov-c { font-size: 8px; color: #bfc6ce; }
.mark {
  position: absolute;
  font: 700 38px/1 "Liberation Sans", sans-serif;
  color: #dc2a33;
  -webkit-text-stroke: 2px #4a76a8;
  paint-order: stroke fill;
}
.m0 { left: 30px; top: 154px; }
.m1 { left: 508px; top: 137px; }

/* spreadsheet */
.ss { width: 217px; height: 311px; display: flex; flex-direction: column; background: #161b23; }
.ssh { display: flex; align-items: center; height: 14px; padding: 2px 3px 0 6px; gap: 2px; background: #171c24; }
.ssh .d50 { margin-left: 2px; margin-right: 5px; }
.ssh .dd b { padding-left: 3px; }
.nm { font-size: 6.700px; color: #8d98a3; white-space: nowrap; }
.ssh .nm { margin: 0 10px 0 2px; }
.push { margin-left: auto; }
.fblue { display: flex; align-items: center; justify-content: center; width: 12px; height: 12px; background: #2d5a88; border-radius: 1px; }
.fblue .ic { color: #cfe0f0; }
.ssm { display: flex; height: 281px; }
.side { width: 95px; background: #151a21; padding: 6px 4px 0; }
.panel { height: 154px; padding-top: 2px; background: #10151b; border-radius: 2px; }
.sr { display: flex; align-items: center; height: 12.500px; margin: 0 4px; font-size: 8px; color: #a8b1ba; white-space: nowrap; border-radius: 2px; }
.sr .cv { margin: 0 2.500px 0 1.500px; }
.sr > .ic { width: 9px; height: 9px; margin-right: 4px; }
.sr.nc { padding-left: 8px; }
.sr.l1 { padding-left: 15px; }
.sr.l1 > .ic { margin-right: 6px; }
.sr.on { background: #2f5577; color: #d0d9e2; }
.sr em { margin-left: auto; padding-right: 3px; color: #4f5a65; font-size: 7.500px; }
.sr.on em { color: #5d7d98; }
.tbl { width: 122px; overflow: hidden; background: #131a22; }
.thd { display: grid; grid-template-columns: 22px 100px; height: 13px; background: #161d26; font-size: 7.500px; line-height: 14px; color: #66717c; }
.pos { text-align: center; padding-right: 22px; }
.tr { display: grid; grid-template-columns: 19px 36px 34px 35px; height: 11.700px; line-height: 11.700px; font-size: 7.300px; color: #919ba5; text-align: right; white-space: nowrap; }
.tr:nth-child(even) { background: #151d26; }
.tr b { color: #6b7681; }
.ssf { height: 16px; line-height: 16px; padding-right: 5px; text-align: right; background: #17232c; font-size: 7.500px; color: #8f9aa5; }
.ssf u { display: inline-block; width: 1px; height: 8px; margin: 0 5px; background: #7f8a95; vertical-align: -1px; }

/* node editor */
.ne {
  position: relative; height: 296px; overflow: hidden;
  background-color: #12171f;
  background-image: radial-gradient(rgba(255, 255, 255, .06) .6px, transparent 1px);
  background-size: 39px 33px;
}
.neh { display: flex; align-items: center; height: 15px; padding: 0 0 0 7px; gap: 2px; background: #182830; }
.neh .dd { background: #0d1116; }
.neh .d40 { margin: 0 1px 0 2px; }
.neh .d40 b { padding-left: 4px; }
.neh .menus { margin-left: 1px; }
.ngb { margin-left: 156px; }
.nm-g { margin: 0 5px 0 5px; }
.t-r2 { margin-left: auto; padding-right: 5px; }
.crumbs { display: flex; align-items: center; gap: 3px; height: 10px; margin-top: 7px; padding-left: 3px; font-size: 6.700px; color: #838e99; white-space: nowrap; }
.crumbs .ic { margin: 0 2px 0 1px; }
.crumbs span { margin-right: 7px; }
.gt { width: 3.500px; height: 3.500px; flex: none; border-right: 1px solid #7c8792; border-top: 1px solid #7c8792; transform: rotate(45deg); }
.links { position: absolute; left: 0; top: 0; width: 784px; height: 296px; fill: none; }
.geo { stroke: #12d29f; stroke-width: 2; }
.shot-b .geo { stroke-width: 1.600; }
.val { stroke: #a9a9a4; stroke-width: 1.200; stroke-dasharray: 5 3; }
.sel-l { stroke: #c7b29a; stroke-width: 1.500; }

.node {
  position: absolute;
  width: 12.220em;
  padding-bottom: .35em;
  background: #1b2735;
  border-radius: .3em;
  box-shadow: 0 2px 4px rgba(0, 0, 0, .4);
  color: #b4bdc6;
  font-size: 9px;
}
.shot-b .node { font-size: 7.200px; }
.shot-b .node.sel { outline: 1px solid #35557c; background: linear-gradient(#1c2638, #1c2c44); }
.hd {
  display: flex; align-items: center;
  height: 1.800em;
  margin-bottom: .22em;
  padding-left: .85em;
  background: #1a232f;
  border-radius: .3em .3em 0 0;
  color: #aeb8c2;
  white-space: nowrap;
}
.hd .cv { width: .5em; height: .5em; margin-right: .55em; margin-left: .05em; }
.teal { background: #177767; color: #d0dbd8; }
.red { background: #7c2a40; color: #d6c6ca; }
.blue { background: #2a4a8e; color: #c9d3e6; }
.plain { background: transparent; }
.row { position: relative; height: 1.830em; line-height: 1.830em; padding: 0 1em; white-space: nowrap; }
.row.out { text-align: right; }
.row.gap { margin-top: .3em; }
.s { position: absolute; top: 50%; width: .72em; height: .72em; margin-top: -.36em; border-radius: 50%; }
.s.o { right: -.36em; }
.s.i { left: -.36em; }
.geo-s { background: #12d6a3; }
.emp { background: #2b2f35; border: 1px solid #777d84; }
.dia { background: #c9c9c9; border-radius: 1px; transform: rotate(45deg) scale(.9); }
.dia.int { background: #5f9a5f; border-radius: 50%; }
.dia.boo { background: #d7b4dc; box-shadow: inset 0 0 0 .13em #5b4460; }
.rint { background: #6a9a60; }
.rval { background: #a9adab; }
.rboo { background: #d2a8d6; }
.chk { display: inline-block; width: 1.050em; height: 1.050em; margin-right: .4em; vertical-align: -.15em; background: #0f1318; border-radius: .1em; }
.seg { display: flex; height: 1.550em; margin: .75em .9em 0; text-align: center; line-height: 1.550em; }
.seg span { flex: 1; background: #10161e; border-radius: .2em 0 0 .2em; }
.seg .on { background: #1d3b5a; color: #c5d0dc; border-radius: 0 .2em .2em 0; }
.fld { display: flex; justify-content: space-between; margin: .28em .9em 0; padding: 0 .8em 0 1em; height: 1.560em; line-height: 1.560em; background: #10151d; }
.fld .s.i { left: -1.260em; }
.fld + .fld { margin-top: .22em; }

/* positions on the node canvas */
.shot-a .gin { left: 34px; top: 78px; }
.shot-a .spl { left: 144px; top: 156px; }
.shot-a .setr { left: 317px; top: 61px; }
.shot-a .circ { left: 317px; top: 156px; }
.shot-a .conv { left: 459px; top: 77px; }
.shot-a .gout { left: 633px; top: 78px; }
.shot-b .gin { left: 31px; top: 56px; }
.shot-b .spl { left: 31px; top: 119px; }
.shot-b .fc { left: 144px; top: 107px; width: 149px; height: 187px; padding: 0; }
.shot-b .res { left: 305px; top: 31px; padding-bottom: .7em; }
.shot-b .setr { left: 418px; top: 69px; }
.shot-b .circ { left: 418px; top: 157px; }
.shot-b .conv { left: 530px; top: 82px; }
.shot-b .gout { left: 642px; top: 82px; }

/* float curve */
.fc-tools { display: flex; align-items: center; justify-content: flex-end; gap: 3px; height: 12px; margin: 2px 7px 3px 0; }
.fc-tools .ic { width: 9px; height: 9px; }
.fc-box { display: block; width: 137px; height: 97px; margin-left: 6px; background: #1a2433; }
.fc-grid { stroke: #25303f; stroke-width: .8; fill: none; }
.fc-area { fill: #33343a; }
.fc-ax { stroke: #4a5056; stroke-width: .6; }
.fc-p { fill: #d6d6d6; }
.fc-bar { display: flex; align-items: center; height: 12px; margin: 3px 7px 0 6px; gap: 1px; background: #10151d; font-size: 7.500px; color: #a8b1ba; }
.fc-sel { display: flex; background: #264a70; }
.fc-bar .v1 { margin-left: 13px; width: 30px; }
.fc-bar .v2 { margin-left: 14px; width: 30px; }
.fc-bar .ic:last-child { margin-left: 6px; width: 8px; height: 8px; }
.fac { display: flex; justify-content: space-between; margin: 3px 7px 0 6px; height: 13px; line-height: 13px; background: linear-gradient(90deg, #1c3a5a, #1a3350); padding: 0 5px 0 9px; }
.fac .s.i { left: -6.500px; }
.fc .row:last-child { padding-left: 7px; }

/* resample */
.drop { display: flex; justify-content: space-between; align-items: center; height: 11px; margin: .7em .9em .15em; padding: 0 .7em; background: #0b0e13; color: #b4bdc6; }
.res .fld { margin-top: .3em; }

/* captions */
.note {
  margin-top: 1px;
  padding: 8px 0 0 11px;
  border: 1px solid #6e7279;
  border-radius: 4px;
  font-family: "Roboto", "Noto Sans CJK SC", sans-serif;
  font-size: 14.200px;
  line-height: 18px;
  color: #b45a63;
}
.note p { width: var(--w); }
.note strong {
  font-weight: 700;
  background: linear-gradient(90deg, #c06d68, #d99a6e 45%);
  -webkit-background-clip: text;
  background-clip: text;
  color: transparent;
}
.note-a { --w: 285px; width: 318px; height: 63px; margin-left: 235px; }
.note-b { --w: 460px; width: 489px; height: 87px; margin-left: 149px; }
```
